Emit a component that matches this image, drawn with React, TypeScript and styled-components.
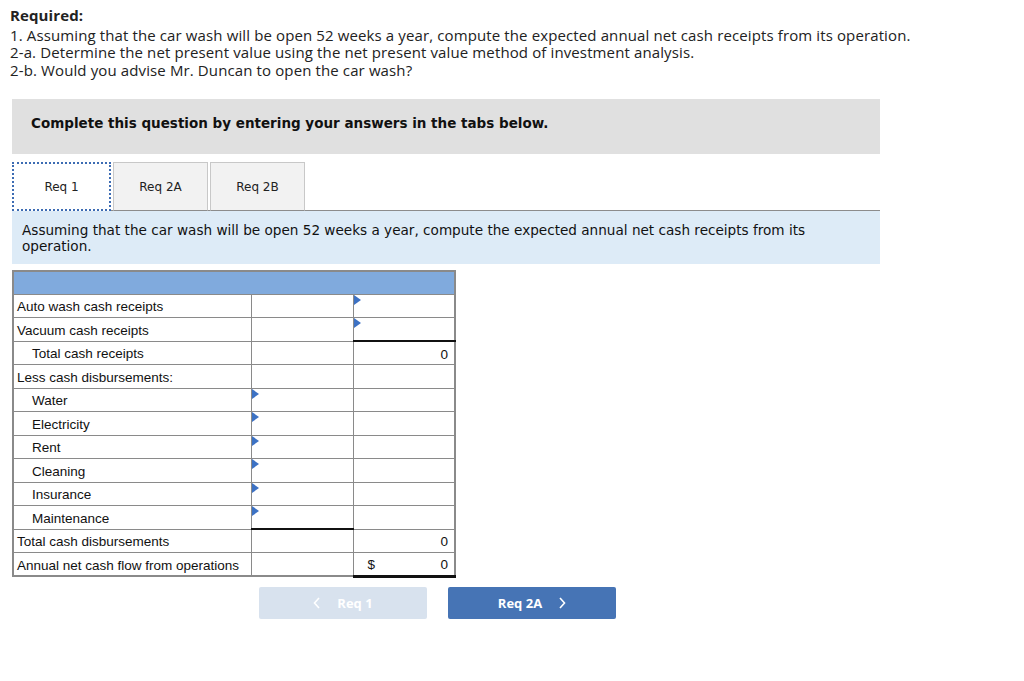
import React from "react";
import styled, { createGlobalStyle } from "styled-components";

const Global = createGlobalStyle`
  body { margin: 0; background: #fff; }
  * { box-sizing: border-box; }
`;

const Page = styled.div`
  padding: 7px 0 0 10px;
  width: 1024px;
  height: 681px;
`;

const Required = styled.div`
  font-family: "Open Sans", sans-serif;
  font-size: 15px;
  letter-spacing: 0.12px;
  line-height: 17.5px;
  color: #222;
`;

const Strong = styled.div`
  font-weight: 700;
  margin-bottom: 2px;
`;

const Instructions = styled.div`
  margin: 20px 0 0 2px;
  width: 868px;
  height: 55px;
  background: #e0e0e0;
  display: flex;
  align-items: center;
  padding: 0 0 8px 19px;
  font-family: "DejaVu Sans", Verdana, sans-serif;
  font-weight: 700;
  font-size: 13.5px;
  color: #111;
`;

const Tabs = styled.div`
  margin: 8px 0 0 2px;
  width: 868px;
  display: flex;
  border-bottom: 1px solid #8c8c8c;
`;

const Tab = styled.div<{ $active?: boolean }>`
  height: 49px;
  margin-bottom: -1px;
  display: flex;
  align-items: center;
  justify-content: center;
  font-family: "DejaVu Sans", Verdana, sans-serif;
  font-size: 12px;
  color: #222;
  width: ${(p) => (p.$active ? "99px" : "95px")};
  margin-right: 2px;
  background: ${(p) => (p.$active ? "#fff" : "#f2f2f2")};
  border: ${(p) => (p.$active ? "2px dotted #3d6cb3" : "1px solid #c8c8c8")};
  border-bottom: ${(p) => (p.$active ? "2px dotted #3d6cb3" : "1px solid #8c8c8c")};
`;

const Info = styled.div`
  margin-left: 2px;
  width: 868px;
  background: #ddebf7;
  padding: 11px 10px 10px 10px;
  font-family: "DejaVu Sans", Verdana, sans-serif;
  font-size: 13.6px;
  line-height: 16px;
  color: #111;
`;

const Table = styled.table`
  margin: 6px 0 0 2px;
  border-collapse: collapse;
  width: 444px;
  font-family: "Liberation Sans", Arial, sans-serif;
  font-size: 13.5px;
  color: #111;
  border: 2px solid #8a8a8a;
`;

const HeadCell = styled.td`
  height: 23px;
  background: #80aadd;
  border: 1px solid #8a8a8a;
`;

const Row = styled.tr`
  height: 23.5px;
`;

const Label = styled.td<{ $indent?: boolean }>`
  width: 238px;
  border: 1px solid #8a8a8a;
  padding: 2px 0 0 ${(p) => (p.$indent ? "18px" : "3px")};
  white-space: nowrap;
`;

const Cell = styled.td<{ $topRule?: boolean; $bottomRule?: boolean; $marker?: boolean }>`
  position: relative;
  width: 102px;
  border: 1px solid #8a8a8a;
  ${(p) => (p.$topRule ? "border-top: 2px solid #111;" : "")}
  ${(p) => (p.$bottomRule ? "border-bottom: 3px solid #111;" : "")}
  padding: 2px 6px 0 14px;
  text-align: right;
  &::before {
    content: "";
    display: ${(p) => (p.$marker ? "block" : "none")};
    position: absolute;
    left: 0;
    top: 0;
    border-top: 5px solid transparent;
    border-bottom: 5px solid transparent;
    border-left: 7px solid #3d72c4;
  }
`;

const Money = styled.div`
  display: flex;
  justify-content: space-between;
`;

const Nav = styled.div`
  margin: 9px 0 0 249px;
  display: flex;
  gap: 21px;
`;

const NavButton = styled.div<{ $disabled?: boolean }>`
  width: 168px;
  height: 32px;
  border-radius: 2px;
  display: flex;
  align-items: center;
  justify-content: center;
  gap: 16px;
  font-family: "Open Sans", sans-serif;
  font-weight: 700;
  font-size: 13px;
  color: #fff;
  background: ${(p) => (p.$disabled ? "#d8e2ee" : "#4674b5")};
`;

const Chevron = ({ dir }: { dir: "left" | "right" }) => (
  <svg width="8" height="12" viewBox="0 0 8 12">
    <path
      d={dir === "left" ? "M6 1 L1.5 6 L6 11" : "M2 1 L6.5 6 L2 11"}
      fill="none"
      stroke="#fff"
      strokeWidth="1.6"
    />
  </svg>
);

type R = {
  label: string;
  indent?: boolean;
  c2?: { marker?: boolean; topRule?: boolean; value?: string };
  c3?: { marker?: boolean; topRule?: boolean; bottomRule?: boolean; value?: string; dollar?: boolean };
};

const rows: R[] = [
  { label: "Auto wash cash receipts", c3: { marker: true } },
  { label: "Vacuum cash receipts", c3: { marker: true } },
  { label: "Total cash receipts", indent: true, c3: { topRule: true, value: "0" } },
  { label: "Less cash disbursements:" },
  { label: "Water", indent: true, c2: { marker: true } },
  { label: "Electricity", indent: true, c2: { marker: true } },
  { label: "Rent", indent: true, c2: { marker: true } },
  { label: "Cleaning", indent: true, c2: { marker: true } },
  { label: "Insurance", indent: true, c2: { marker: true } },
  { label: "Maintenance", indent: true, c2: { marker: true } },
  { label: "Total cash disbursements", c2: { topRule: true }, c3: { value: "0" } },
  { label: "Annual net cash flow from operations", c3: { value: "0", dollar: true, bottomRule: true } },
];

export default function App() {
  return (
    <Page>
      <Global />
      <Required>
        <Strong>Required:</Strong>
        <div>1. Assuming that the car wash will be open 52 weeks a year, compute the expected annual net cash receipts from its operation.</div>
        <div>2-a. Determine the net present value using the net present value method of investment analysis.</div>
        <div>2-b. Would you advise Mr. Duncan to open the car wash?</div>
      </Required>
      <Instructions>Complete this question by entering your answers in the tabs below.</Instructions>
      <Tabs>
        <Tab $active>Req 1</Tab>
        <Tab>Req 2A</Tab>
        <Tab>Req 2B</Tab>
      </Tabs>
      <Info>
        Assuming that the car wash will be open 52 weeks a year, compute the expected annual net cash receipts from its
        <br />
        operation.
      </Info>
      <Table>
        <tbody>
          <tr>
            <HeadCell colSpan={3} />
          </tr>
          {rows.map((r) => (
            <Row key={r.label}>
              <Label $indent={r.indent}>{r.label}</Label>
              <Cell $marker={r.c2?.marker} $topRule={r.c2?.topRule}>
                {r.c2?.value}
              </Cell>
              <Cell $marker={r.c3?.marker} $topRule={r.c3?.topRule} $bottomRule={r.c3?.bottomRule}>
                {r.c3?.dollar ? (
                  <Money>
                    <span>$</span>
                    <span>{r.c3?.value}</span>
                  </Money>
                ) : (
                  r.c3?.value
                )}
              </Cell>
            </Row>
          ))}
        </tbody>
      </Table>
      <Nav>
        <NavButton $disabled>
          <Chevron dir="left" />
          Req 1
        </NavButton>
        <NavButton>
          Req 2A
          <Chevron dir="right" />
        </NavButton>
      </Nav>
    </Page>
  );
}
